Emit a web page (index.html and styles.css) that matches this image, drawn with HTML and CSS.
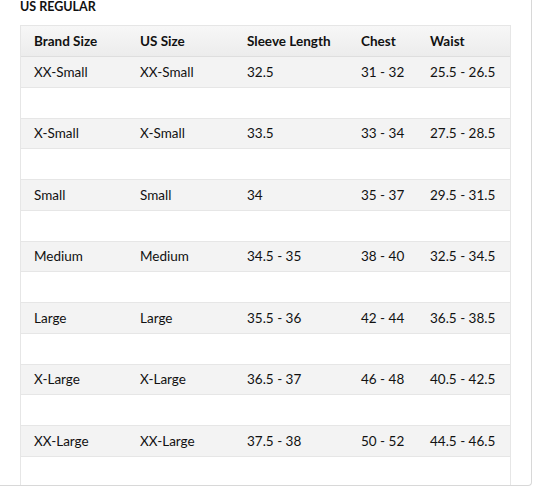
FILE: index.html
```html
<!DOCTYPE html>
<html>
<head>
<meta charset="utf-8">
<link rel="stylesheet" href="styles.css">
</head>
<body>
<div class="frame">
  <div class="title">US REGULAR</div>
  <div class="sizes">
    <div class="row head"><span>Brand Size</span><span>US Size</span><span>Sleeve Length</span><span>Chest</span><span>Waist</span></div>
    <div class="row data"><span>XX-Small</span><span>XX-Small</span><span>32.5</span><span>31 - 32</span><span>25.5 - 26.5</span></div>
    <div class="row blank"></div>
    <div class="row data"><span>X-Small</span><span>X-Small</span><span>33.5</span><span>33 - 34</span><span>27.5 - 28.5</span></div>
    <div class="row blank"></div>
    <div class="row data"><span>Small</span><span>Small</span><span>34</span><span>35 - 37</span><span>29.5 - 31.5</span></div>
    <div class="row blank"></div>
    <div class="row data"><span>Medium</span><span>Medium</span><span>34.5 - 35</span><span>38 - 40</span><span>32.5 - 34.5</span></div>
    <div class="row blank"></div>
    <div class="row data"><span>Large</span><span>Large</span><span>35.5 - 36</span><span>42 - 44</span><span>36.5 - 38.5</span></div>
    <div class="row blank"></div>
    <div class="row data"><span>X-Large</span><span>X-Large</span><span>36.5 - 37</span><span>46 - 48</span><span>40.5 - 42.5</span></div>
    <div class="row blank"></div>
    <div class="row data"><span>XX-Large</span><span>XX-Large</span><span>37.5 - 38</span><span>50 - 52</span><span>44.5 - 46.5</span></div>
    <div class="row blank"></div>
  </div>
</div>
</body>
</html>
```
FILE: styles.css
```css
html, body {
  margin: 0;
  padding: 0;
  background: #fff;
}
body {
  font-family: "Lato", "Open Sans", sans-serif;
  color: #111;
  width: 533px;
  height: 487px;
  overflow: hidden;
}
.frame {
  width: 531px;
  height: 485px;
  border-right: 1px solid #d8d8d8;
  border-bottom: 1px solid #d8d8d8;
  border-bottom-right-radius: 4px;
  overflow: hidden;
}
.title {
  margin: 0 0 0 20px;
  padding-top: 1px;
  font-size: 12.5px;
  font-weight: 700;
  line-height: 12px;
  height: 12px;
  color: #111;
}
.sizes {
  margin: 12px 0 0 20px;
  width: 489px;
  border: 1px solid #e6e6e6;
  border-bottom: none;
  font-size: 13.5px;
}
.row {
  display: grid;
  grid-template-columns: 106px 107px 114px 69px 1fr;
  align-items: center;
  height: 29.75px;
  border-bottom: 1px solid #e6e6e6;
}
.row span {
  padding-left: 13px;
  white-space: nowrap;
}
.head {
  font-weight: 700;
  height: 30px;
  background: linear-gradient(#f7f7f7, #ececec);
  border-bottom: 1px solid #dedede;
}
.data {
  background: #f3f3f3;
}
.blank {
  background: #fff;
}
```
